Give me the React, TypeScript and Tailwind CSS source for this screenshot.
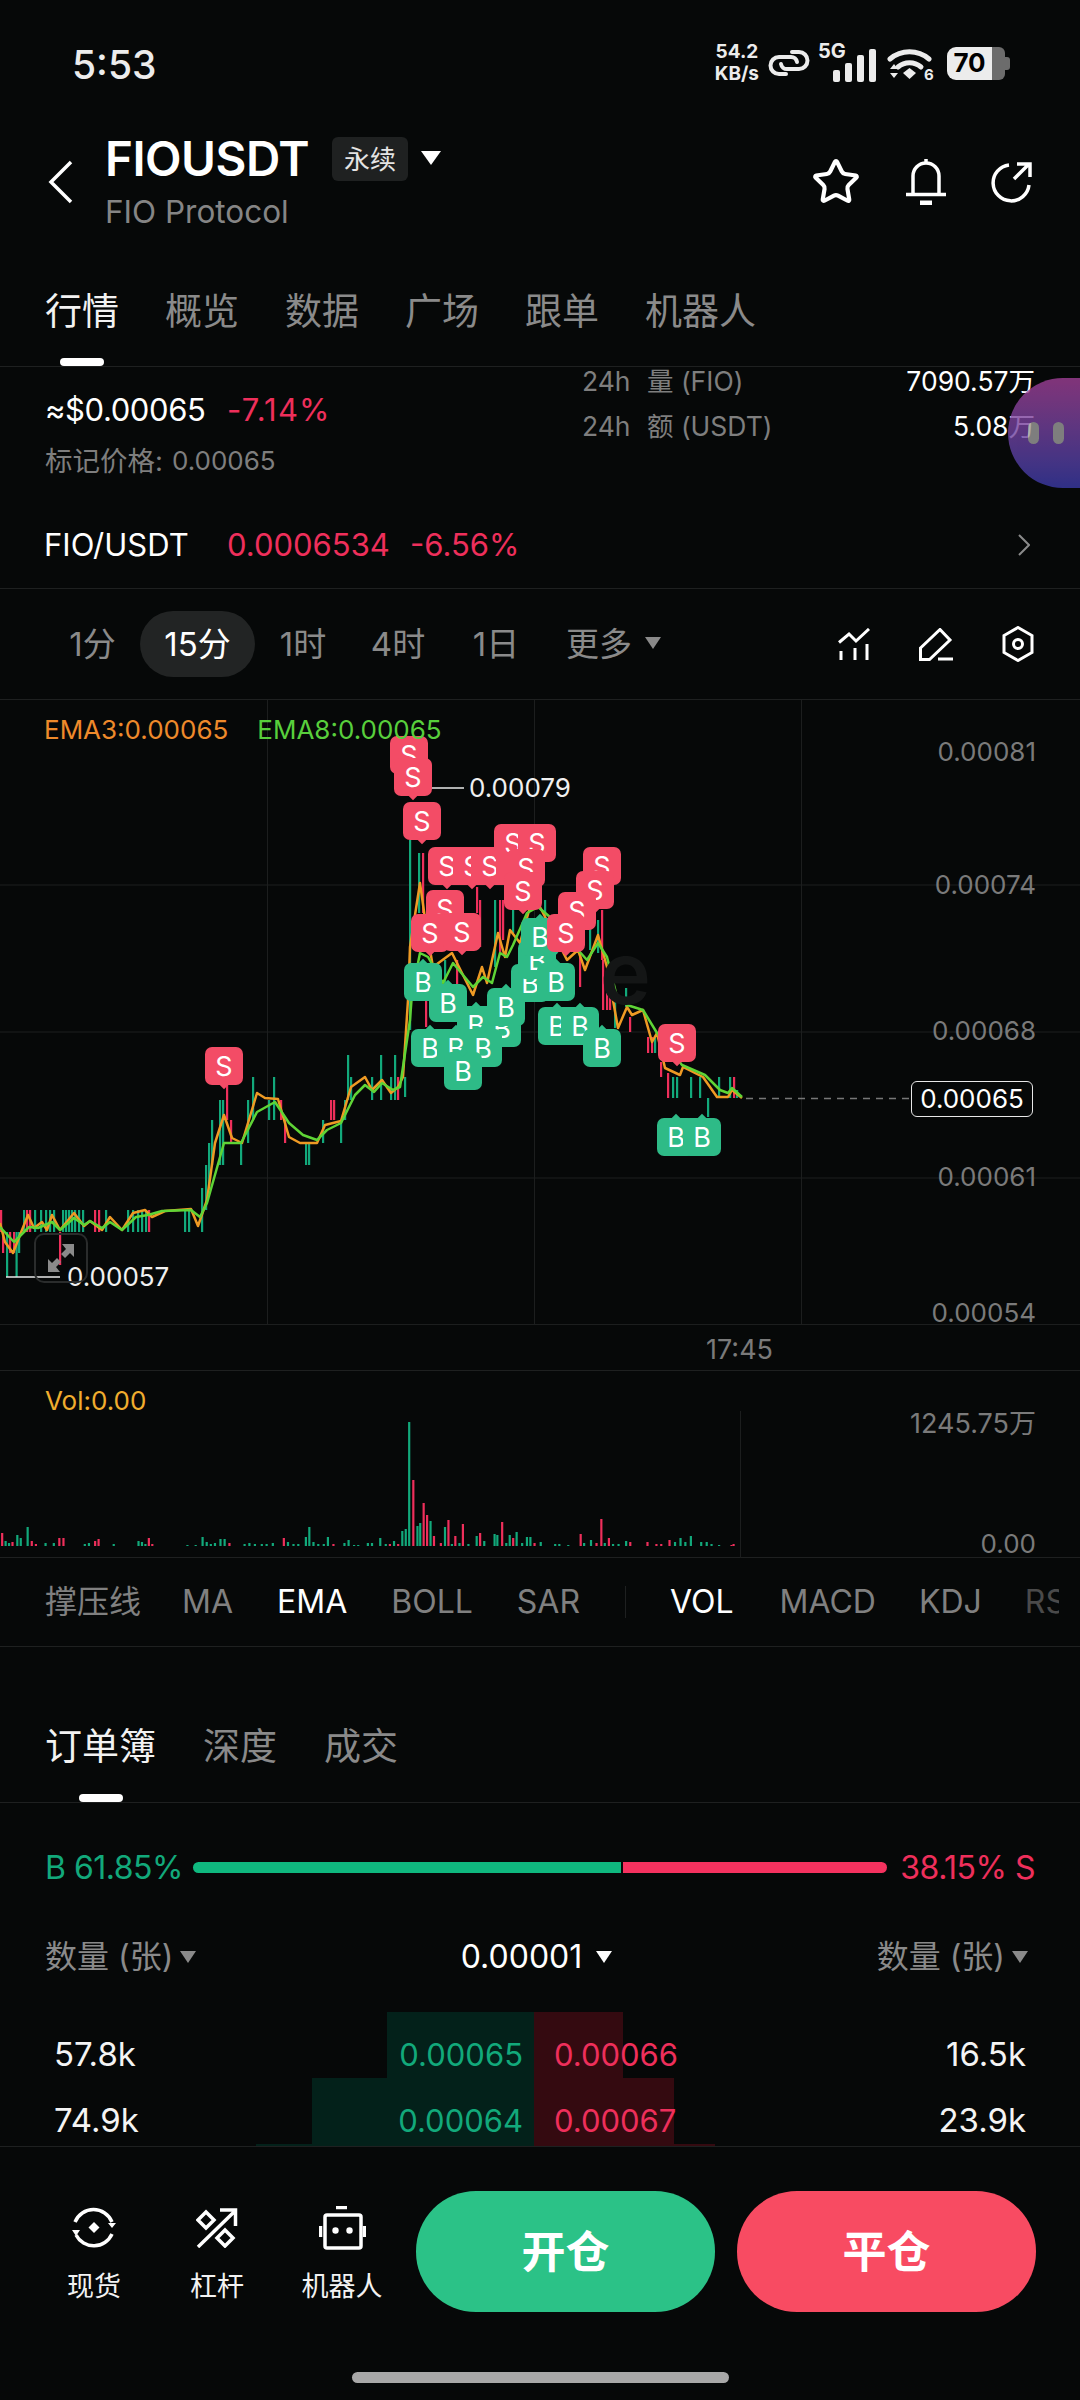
import React from 'react';
import { Star } from 'lucide-react';

const G = '#12a97b';
const R = '#ee2f5b';

// EMA lines, read off the reference in page coordinates
const EMA3 = '0,1223 5,1242 13,1253 20,1235 28,1215 34,1228 42,1222 47,1230 52,1215 60,1230 74,1213 84,1226 90,1221 102,1230 110,1217 122,1230 133,1213 145,1210 152,1217 165,1211 191,1209 198,1226 207,1200 215,1143 224,1115 232,1138 242,1143 257,1093 265,1098 278,1099 289,1137 300,1143 317,1143 325,1125 341,1121 351,1087 365,1077 372,1090 382,1080 391,1093 398,1087 403,1077 408,1000 410,947 420,883 427,933 433,967 452,953 473,995 482,967 487,983 498,933 505,957 510,930 520,943 530,907 540,907 567,960 578,950 585,970 598,935 607,967 618,1028 627,1007 632,1015 643,1010 652,1042 657,1033 665,1068 680,1075 683,1067 703,1077 717,1097 728,1097 732,1090 742,1098';
const EMA8 = '0,1227 14,1242 29,1227 38,1228 52,1222 60,1230 74,1218 84,1225 90,1221 102,1228 110,1222 122,1230 136,1217 148,1215 162,1211 191,1210 200,1217 207,1203 224,1143 241,1143 257,1112 275,1102 289,1123 303,1135 317,1140 327,1130 341,1123 355,1095 365,1085 374,1092 382,1083 393,1090 400,1087 410,1020 412,993 420,953 428,957 443,983 453,963 473,987 483,977 492,983 500,953 507,957 513,945 527,913 538,907 550,917 567,950 578,950 587,960 598,943 607,957 617,997 627,1005 643,1010 657,1033 682,1065 705,1075 720,1090 728,1093 732,1088 742,1097';

// x, top, bottom, colour of each candle
const CANDLES: [number, number, number, string][] = [
  [1, 1210, 1232, R], [3, 1232, 1253, R], [7, 1232, 1277, G], [10, 1232, 1253, R], [14, 1232, 1253, R], [16.5, 1232, 1277, G], [19, 1232, 1253, G],
  [24, 1210, 1232, G], [27, 1210, 1232, R], [30, 1210, 1232, R], [35, 1210, 1232, G], [41, 1210, 1232, G], [46, 1210, 1232, G], [50, 1210, 1232, G],
  [54, 1210, 1232, G], [60, 1232, 1265, R], [63, 1210, 1232, G], [66, 1210, 1232, G], [69, 1210, 1232, G], [72, 1210, 1232, G], [75, 1210, 1232, G],
  [79, 1210, 1232, G], [83, 1210, 1232, G], [95, 1210, 1232, R], [99, 1210, 1232, R], [106, 1210, 1232, G], [128, 1210, 1232, G], [133, 1210, 1232, G],
  [138, 1210, 1232, G], [142, 1210, 1232, G], [146, 1210, 1232, G], [149, 1210, 1232, R], [185, 1210, 1232, G], [189, 1210, 1232, G],
  [202, 1188, 1232, G], [206, 1165, 1210, G], [209, 1143, 1190, G], [212, 1120, 1165, G], [220, 1100, 1165, G], [223, 1100, 1165, G], [227, 1085, 1120, R],
  [231, 1120, 1143, R], [241, 1143, 1165, G], [248, 1100, 1143, G], [253, 1077, 1120, G], [269, 1100, 1120, G], [274, 1077, 1120, G], [281, 1100, 1120, R],
  [285, 1120, 1143, R], [306, 1143, 1165, G], [309, 1143, 1165, G], [323, 1120, 1143, G], [331, 1100, 1120, R], [334, 1100, 1120, R], [341, 1120, 1143, G],
  [345, 1100, 1120, G], [348, 1055, 1100, G], [351, 1077, 1100, G], [372, 1077, 1100, G], [381, 1055, 1100, G], [391, 1077, 1100, G], [395, 1055, 1100, G],
  [398, 1077, 1100, R], [405, 1077, 1097, G], [410, 840, 1030, G], [419, 853, 913, G], [423, 853, 913, R], [426, 1000, 1027, R], [445, 960, 997, G],
  [457, 960, 987, R], [477, 887, 913, R], [480, 900, 947, R], [495, 900, 967, G], [500, 900, 953, R], [503, 900, 940, R], [513, 907, 933, G], [545, 900, 920, G],
  [580, 953, 987, R], [590, 927, 950, G], [598, 920, 953, G], [602, 910, 960, R], [603, 960, 1010, R], [607, 977, 1010, R], [610, 977, 1010, R], [615, 1000, 1028, G],
  [626, 988, 1007, G], [630, 1017, 1032, R], [648, 1037, 1053, R], [652, 1037, 1053, R], [655, 1037, 1053, G], [661, 1062, 1077, R], [668, 1073, 1098, R],
  [673, 1077, 1098, G], [677, 1077, 1098, G], [691, 1077, 1098, G], [700, 1077, 1098, G], [708, 1098, 1117, G], [719, 1077, 1098, G], [730, 1077, 1098, G],
  [734, 1077, 1098, R], [737, 1090, 1098, G],
];

// x (in the crop's scale), height, colour of each volume bar
const VOLUME: [number, number, string][] = [
  [3, 13, R], [8, 5, G], [13, 3, G], [18, 4, R], [25, 11, G], [30, 8, G], [40, 19, G], [46, 5, R], [52, 2, R], [66, 3, G], [78, 3, G], [86, 8, R], [92, 8, R], [123, 2, G], [129, 3, G], [138, 5, R], [143, 7, R], [165, 2, G],
  [201, 5, G], [206, 4, G], [211, 2, G], [216, 8, R], [221, 2, R], [272, 1, G], [284, 1, G], [294, 9, G], [300, 4, G], [306, 2, G], [312, 3, G], [320, 7, G], [326, 7, G], [333, 3, R], [355, 2, G], [362, 3, G], [370, 2, G],
  [380, 2, G], [387, 2, G], [396, 3, G], [412, 8, R], [418, 4, G], [426, 2, G], [433, 2, G], [444, 9, G], [449, 19, G], [455, 4, G], [462, 2, G], [470, 2, G], [476, 9, G], [484, 2, R], [500, 3, G], [506, 6, G], [514, 1, G],
  [520, 1, G], [534, 3, G], [540, 3, G], [552, 8, G], [560, 2, G], [566, 2, R], [572, 5, G], [578, 2, R], [584, 15, G], [589, 17, G], [594, 124, G], [600, 66, R], [606, 20, G], [610, 23, G], [615, 43, R], [620, 31, R], [625, 25, G],
  [630, 10, R], [640, 3, R], [646, 19, G], [651, 26, R], [656, 2, G], [661, 10, R], [667, 3, G], [672, 22, R], [680, 2, G], [692, 10, G], [697, 13, R], [703, 5, G], [718, 12, G], [722, 11, G], [729, 24, R], [735, 3, G], [740, 11, G],
  [745, 8, R], [750, 14, G], [758, 3, G], [765, 9, G], [770, 9, G], [776, 3, R], [785, 4, G], [806, 2, G], [812, 2, G], [825, 1, G], [843, 12, R], [848, 3, G], [858, 6, G], [866, 3, R], [873, 27, R], [878, 3, G], [884, 8, R],
  [890, 2, G], [898, 2, G], [909, 5, G], [915, 4, R], [940, 4, R], [953, 2, R], [960, 2, R], [972, 6, R], [980, 4, G], [988, 8, G], [995, 4, G], [1003, 10, G], [1018, 4, G], [1026, 4, G], [1033, 2, G], [1044, 1, G], [1062, 1, R], [1065, 2, R],
];

// trade markers, centre in page coordinates, in paint order
const MARKERS: [string, number, number][] = [
  ['S', 224, 1066], ['S', 409, 755], ['S', 413, 777], ['S', 422, 821],
  ['S', 447, 866], ['S', 472, 866], ['S', 490, 866], ['S', 515, 866], ['S', 513, 843], ['S', 537, 843], ['S', 526, 868], ['S', 523, 891],
  ['S', 445, 909], ['S', 430, 933], ['S', 462, 932],
  ['B', 423, 982], ['B', 448, 1003], ['B', 476, 1025], ['B', 502, 1028], ['B', 506, 1007], ['B', 530, 983], ['B', 537, 960], ['B', 540, 937], ['B', 556, 982],
  ['B', 430, 1048], ['B', 456, 1048], ['B', 483, 1048], ['B', 463, 1071],
  ['B', 557, 1026], ['B', 580, 1026], ['B', 602, 1048],
  ['S', 602, 866], ['S', 595, 890], ['S', 577, 911], ['S', 566, 933],
  ['S', 677, 1043], ['B', 676, 1137], ['B', 702, 1137],
];

const AXIS: [string, string][] = [['0.00081', 'mt-[37px]'], ['0.00074', 'mt-[103px]'], ['0.00068', 'mt-[116px]'], ['0.00061', 'mt-[116px]'], ['0.00054', 'mt-[106px]']];

const Marker = ({ type, x, y }: { type: string; x: number; y: number }) => (
  <div
    className={`absolute w-[38px] h-[38px] rounded-[7px] flex items-center justify-center text-[27px] leading-none text-white ${type === 'S' ? 'bg-[#f34c66]' : 'bg-[#2ebb87]'}`}
    style={{ left: x - 19, top: y - 719 }}
  >
    {type}
    <span className={`absolute left-[16px] w-[6px] h-[6px] rotate-45 ${type === 'S' ? 'bottom-[-3px] bg-[#f34c66]' : 'top-[-3px] bg-[#2ebb87]'}`} />
  </div>
);

const Caret = ({ color = 'border-t-[#8a8a8a]' }: { color?: string }) => (
  <span className={`inline-block w-0 h-0 border-x-[8px] border-x-transparent border-t-[12px] ${color}`} />
);

const StatusBar = () => (
  <div className="h-[128px] pl-[72px] pr-[70px] flex items-start justify-between text-[#ececec] shrink-0">
    <span className="text-[39px] font-medium leading-none mt-[45px]">5:53</span>
    <div className="flex items-center gap-[8px] mt-[40px] h-[46px]">
      <div className="flex flex-col items-center text-[19px] font-bold leading-[22px] mr-[1px]">
        <span>54.2</span>
        <span>KB/s</span>
      </div>
      <svg width="42" height="34" viewBox="0 0 42 34" fill="none" stroke="#ececec" strokeWidth="4" strokeLinecap="round">
        <path d="M24 6h7a8.500 8.500 0 0 1 0 17H19a6 6 0 0 1-6-5" />
        <path d="M18 28h-7a8.500 8.500 0 0 1 0-17h12a6 6 0 0 1 6 5" />
      </svg>
      <div className="relative w-[58px] h-[38px]">
        <span className="absolute left-0 top-[-3px] text-[20px] font-bold leading-none">5G</span>
        <div className="absolute right-0 bottom-0 flex items-end gap-[5px]">
          <span className="w-[7px] h-[12px] rounded-[2px] bg-[#ececec]" />
          <span className="w-[7px] h-[19px] rounded-[2px] bg-[#ececec]" />
          <span className="w-[7px] h-[27px] rounded-[2px] bg-[#ececec]" />
          <span className="w-[7px] h-[33px] rounded-[2px] bg-[#ececec]" />
        </div>
      </div>
      <svg width="50" height="36" viewBox="0 0 50 36" fill="#ececec" className="ml-[3px]">
        <path d="M3 14a30 30 0 0 1 39 0" fill="none" stroke="#ececec" strokeWidth="5" strokeLinecap="round" />
        <path d="M11 22a18 18 0 0 1 23 0" fill="none" stroke="#ececec" strokeWidth="5" strokeLinecap="round" />
        <path d="M16 28l6.500-5 6.500 5-6.500 6z" />
        <path d="M3 24l4-5 4 5zM3 28l4 5 4-5z" />
        <text x="37" y="35" fontSize="15" fontWeight="700">6</text>
      </svg>
      <div className="flex items-center h-[33px] ml-[2px]">
        <div className="w-[45px] h-[33px] rounded-l-[9px] bg-[#ececec] text-[26px] font-bold text-black flex items-center justify-center leading-none">70</div>
        <div className="w-[13px] h-[33px] rounded-r-[6px] bg-[#6c6c6c]" />
        <div className="w-[5px] h-[13px] rounded-r-[3px] bg-[#6c6c6c]" />
      </div>
    </div>
  </div>
);

const Header = () => (
  <div className="h-[134px] pl-[48px] pr-[47px] flex items-start shrink-0">
    <svg width="26" height="44" viewBox="0 0 26 44" fill="none" stroke="white" strokeWidth="3.500" className="mt-[32px] mr-[31px]">
      <path d="M23 2 3 22l20 20" />
    </svg>
    <div className="flex flex-col">
      <div className="flex items-center h-[62px]">
        <span className="text-[47.500px] font-semibold text-white leading-none tracking-[-0.5px]">FIOUSDT</span>
        <span className="ml-[23px] w-[76px] h-[44px] rounded-[6px] bg-[#1f2121] text-[#e4e4e4] text-[26px] flex items-center justify-center">永续</span>
        <span className="ml-[13px] -mt-[3px] w-0 h-0 border-x-[10px] border-x-transparent border-t-[14px] border-t-white" />
      </div>
      <span className="text-[31.500px] leading-[40px] text-[#858585] mt-[2px]">FIO Protocol</span>
    </div>
    <div className="ml-auto flex items-center gap-[45px] mt-[29px]">
      <Star size={50} strokeWidth={2} color="white" />
      <svg width="40" height="46" viewBox="0 0 40 46" fill="none" stroke="white" strokeWidth="3.500">
        <path d="M7 35V17a13 13 0 0 1 26 0v18M0 35.500h40M20 0v4" />
        <path d="M14 44h12" strokeWidth="5" />
      </svg>
      <svg width="42" height="42" viewBox="0 0 42 42" fill="none" stroke="white" strokeWidth="3.500">
        <path d="M18 4a18 18 0 1 0 20 20" />
        <path d="M23 18 38 3M26 3h13v13" />
      </svg>
    </div>
  </div>
);

const Tabs = () => (
  <div className="h-[105px] px-[45px] flex gap-[46px] border-b border-[#1e2020] shrink-0 text-[37px] text-[#8a8a8a] leading-none pt-[31px]">
    {['行情', '概览', '数据', '广场', '跟单', '机器人'].map((t, i) => (
      <span key={t} className={`relative h-[37px] ${i === 0 ? 'text-[#f2f2f2]' : ''}`}>
        {t}
        {i === 0 && <span className="absolute left-[15px] top-[65px] w-[44px] h-[8px] rounded-full bg-white" />}
      </span>
    ))}
  </div>
);

const Stats = () => (
  <div className="relative h-[133px] px-[45px] flex justify-between shrink-0">
    <div className="flex flex-col pt-[23px]">
      <div className="flex text-[31px] leading-[40px] whitespace-nowrap">
        <span className="text-white w-[182px] tracking-[-0.4px]">≈$0.00065</span>
        <span className="text-[#ee2f5b] tracking-[1.2px]">-7.14%</span>
      </div>
      <div className="flex gap-[9px] leading-[34px] text-[#7e7e7e] mt-[14px] whitespace-nowrap">
        <span className="text-[27.500px]">标记价格:</span>
        <span className="text-[26px]">0.00065</span>
      </div>
    </div>
    <div className="w-[453px] flex flex-col text-[26.500px] leading-[34px] -mt-[9px]">
      {[['量 (FIO)', '7090.57万'], ['额 (USDT)', '5.08万']].map(([label, value]) => (
        <div key={label} className="flex h-[45px] items-center">
          <span className="text-[#7e7e7e] w-[65px]">24h</span>
          <span className="text-[#7e7e7e]">{label}</span>
          <span className="ml-auto text-white">{value}</span>
        </div>
      ))}
    </div>
    {/* floating assistant bubble, sits over the stats */}
    <div className="absolute right-0 top-[11px] w-[72px] h-[110px] rounded-l-[55px] bg-gradient-to-b from-[#a03f96] to-[#3a3aa6] opacity-80 flex items-center gap-[14px] pl-[20px]">
      <span className="w-[11px] h-[22px] rounded-full bg-[#9c9c9c]" />
      <span className="w-[11px] h-[22px] rounded-full bg-[#9c9c9c]" />
    </div>
  </div>
);

const PairRow = () => (
  <div className="h-[89px] pl-[44px] pr-[50px] flex items-center border-b border-[#1e2020] text-[31px] shrink-0 pt-[2px]">
    <span className="text-white w-[183px]">FIO/USDT</span>
    <span className="text-[#ee2f5b] w-[183px]">0.0006534</span>
    <span className="text-[#ee2f5b]">-6.56%</span>
    <svg width="12" height="22" viewBox="0 0 12 22" fill="none" stroke="#8a8a8a" strokeWidth="2" className="ml-auto">
      <path d="m1 1 10 10L1 21" />
    </svg>
  </div>
);

const Timeframes = () => (
  <div className="h-[111px] pl-[45px] pr-[46px] flex items-center border-b border-[#1e2020] text-[33px] text-[#8a8a8a] shrink-0">
    <div className="flex items-center">
      <span className="w-[95px] text-center pt-[2px]">1分</span>
      <span className="w-[115px] h-[66px] rounded-[33px] bg-[#222424] text-white flex items-center justify-center pt-[2px]">15分</span>
      <span className="w-[96px] text-center pt-[2px]">1时</span>
      <span className="w-[94px] text-center pt-[2px]">4时</span>
      <span className="w-[102px] text-center pt-[2px]">1日</span>
      <span className="ml-[19px] pt-[2px]">更多</span>
      <span className="ml-[13px] -mt-[3px] flex"><Caret /></span>
    </div>
    <div className="ml-auto flex items-center gap-[49px]">
      <svg width="32" height="32" viewBox="0 0 32 32" fill="none" stroke="white" strokeWidth="3">
        <path d="M1 14.500 11 6l7 7L31 1M3 23v9M17 20v12M29 16v16" />
      </svg>
      <svg width="34" height="33" viewBox="0 0 34 33" fill="none" stroke="white" strokeWidth="3">
        <path d="M1.500 20 21 1.500 31 12 10.500 31.500h-9zM19 31h15" />
      </svg>
      <svg width="32" height="36" viewBox="0 0 32 36" fill="none" stroke="white" strokeWidth="3">
        <path d="M16 1.500 30 9.500v17l-14 8-14-8v-17z" />
        <circle cx="16" cy="18" r="4.500" />
      </svg>
    </div>
  </div>
);

const Chart = () => (
  <div className="relative h-[625px] overflow-hidden shrink-0">
    <svg width="1080" height="625" viewBox="0 700 1080 625" className="absolute inset-0">
      {[885, 1032, 1178, 1324.5].map((y) => <line key={y} x1="0" x2="1080" y1={y} y2={y} stroke="#1c1e1e" />)}
      {[267.5, 534.5, 801.5].map((x) => <line key={x} x1={x} x2={x} y1="700" y2="1325" stroke="#1c1e1e" />)}
      {CANDLES.map(([x, a, b, c], i) => <rect key={i} x={x - 1} y={a} width="2.200" height={b - a} fill={c} />)}
      <polyline points={EMA3} fill="none" stroke="#ee9a24" strokeWidth="2.500" strokeLinejoin="round" />
      <polyline points={EMA8} fill="none" stroke="#5fd436" strokeWidth="2.500" strokeLinejoin="round" />
      <line x1="410" x2="464" y1="788" y2="788" stroke="#e8e8e8" strokeWidth="1.500" />
      <line x1="6" x2="60" y1="1277" y2="1277" stroke="#e8e8e8" strokeWidth="1.500" />
      <line x1="746" x2="910" y1="1098.500" y2="1098.500" stroke="#777" strokeWidth="1.500" strokeDasharray="7 6" />
    </svg>
    <span className="absolute left-[600px] top-[230px] text-[86px] leading-none font-semibold text-[#141616]">e</span>
    {MARKERS.map(([t, x, y], i) => <Marker key={i} type={t} x={x} y={y} />)}
    <div className="absolute left-[44px] top-[15px] flex gap-[29px] text-[26px] leading-[30px]">
      <span className="text-[#ee8a2b]">EMA3:0.00065</span>
      <span className="text-[#58cf3c]">EMA8:0.00065</span>
    </div>
    <span className="absolute left-[469px] top-[73px] text-[26px] leading-[30px] text-[#f0f0f0]">0.00079</span>
    <span className="absolute left-[67px] top-[562px] text-[26px] leading-[30px] text-[#f0f0f0]">0.00057</span>
    <div className="absolute left-[34px] top-[533px] w-[54px] h-[50px] rounded-[10px] border-[2px] border-[#2a2c2c] flex items-center justify-center">
      <svg width="28" height="28" viewBox="0 0 28 28" fill="#8a8a8a">
        <path d="M27 0v13l-4-4-5 5-4-4 5-5-4-5zM1 28V15l4 4 5-5 4 4-5 5 4 5z" />
      </svg>
    </div>
    <div className="absolute right-[44px] top-0 flex flex-col items-end text-[26px] leading-[30px] text-[#7a7a7a]">
      {AXIS.map(([v, m]) => <span key={v} className={m}>{v}</span>)}
    </div>
    <span className="absolute left-[911px] top-[381px] w-[122px] h-[36px] rounded-[6px] border border-[#e8e8e8] bg-[#060808] text-[26px] leading-none text-white flex items-center justify-center">0.00065</span>
  </div>
);

const Volume = () => (
  <>
    <div className="h-[46px] border-b border-[#1e2020] text-[27px] leading-[50px] text-[#7a7a7a] pl-[706px] shrink-0">17:45</div>
    <div className="relative h-[187px] border-b border-[#1e2020] shrink-0">
      <svg width="1080" height="187" viewBox="0 1372 1080 187" className="absolute inset-0">
        <line x1="740.500" x2="740.500" y1="1412" y2="1559" stroke="#1c1e1e" />
        {VOLUME.map(([x, h, c]) => <rect key={x} x={x / 1.452 - 1} y={1547 - h} width="2.200" height={h} fill={c} />)}
      </svg>
      <span className="absolute left-[45px] top-[15px] text-[26px] leading-[30px] text-[#f0ad2e]">Vol:0.00</span>
      <span className="absolute right-[44px] top-[38px] text-[27px] leading-[30px] text-[#7a7a7a]">1245.75万</span>
      <span className="absolute right-[44px] top-[158px] text-[26px] leading-[30px] text-[#7a7a7a]">0.00</span>
    </div>
  </>
);

const Indicators = () => (
  <div className="h-[89px] pl-[45px] flex items-center border-b border-[#1e2020] text-[32px] text-[#808080] overflow-hidden whitespace-nowrap shrink-0">
    <span>撑压线</span>
    <span className="ml-[41px]">MA</span>
    <span className="ml-[44px] text-white">EMA</span>
    <span className="ml-[44px]">BOLL</span>
    <span className="ml-[44px]">SAR</span>
    <span className="ml-[45px] w-px h-[32px] bg-[#1e2020]" />
    <span className="ml-[44px] text-white">VOL</span>
    <span className="ml-[46px]">MACD</span>
    <span className="ml-[43px]">KDJ</span>
    <span className="ml-[43px] w-[34px] overflow-hidden text-[#4a4a4a]">RSI</span>
  </div>
);

const BookRow = ({ buy, bid, ask, sell, bidW, askW }: { buy: string; bid: string; ask: string; sell: string; bidW: number; askW: number }) => (
  <div className="flex h-[66px] shrink-0">
    <div className="relative w-[534px] flex items-center justify-between pl-[54px] pr-[11px] pt-[18px] leading-none">
      <div className="absolute right-0 inset-y-0 bg-[#03211a]" style={{ width: bidW }} />
      <span className="relative text-[33px] text-[#f4f4f4]">{buy}</span>
      <span className="relative text-[#12a97b]">{bid}</span>
    </div>
    <div className="relative flex-1 flex items-center justify-between pl-[20px] pr-[54px] pt-[18px] leading-none">
      <div className="absolute left-0 inset-y-0 bg-[#340a10]" style={{ width: askW }} />
      <span className="relative text-[#ee2f5b]">{ask}</span>
      <span className="relative text-[33px] text-[#f4f4f4]">{sell}</span>
    </div>
  </div>
);

const OrderBook = () => (
  <div className="flex flex-col h-[500px] shrink-0">
    <div className="h-[156px] px-[45px] flex gap-[47px] border-b border-[#1e2020] text-[37px] text-[#8a8a8a] leading-none pt-[81px] shrink-0">
      <span className="relative h-[37px] text-[#f2f2f2]">
        订单簿
        <span className="absolute left-[34px] top-[66px] w-[44px] h-[8px] rounded-full bg-white" />
      </span>
      <span>深度</span>
      <span>成交</span>
    </div>
    <div className="h-[65px] mt-[32px] px-[45px] flex items-center text-[32px] leading-none shrink-0">
      <span className="text-[#12a97b] w-[148px] tracking-[-0.5px] whitespace-nowrap">B 61.85%</span>
      <div className="w-[428px] h-[11px] rounded-l-full bg-[#0fb97f]" />
      <div className="w-[2px]" />
      <div className="w-[264px] h-[11px] rounded-r-full bg-[#f5325f]" />
      <span className="text-[#ee2f5b] ml-auto tracking-[-0.5px] whitespace-nowrap">38.15% S</span>
    </div>
    <div className="h-[112px] pl-[45px] pr-[52px] flex items-center justify-between text-[32px] text-[#8a8a8a] leading-none shrink-0 pt-[2px]">
      <span className="flex items-center gap-[7px] whitespace-nowrap">数量 (张) <Caret /></span>
      <span className="flex items-center gap-[14px] text-white">0.00001 <Caret color="border-t-white" /></span>
      <span className="flex items-center gap-[7px] whitespace-nowrap">数量 (张) <Caret /></span>
    </div>
    <div className="flex-1 flex flex-col overflow-hidden text-[31px] border-b border-[#1e2020]">
      <BookRow buy="57.8k" bid="0.00065" ask="0.00066" sell="16.5k" bidW={147} askW={89} />
      <BookRow buy="74.9k" bid="0.00064" ask="0.00067" sell="23.9k" bidW={222} askW={140} />
      <BookRow buy="" bid="" ask="" sell="" bidW={278} askW={181} />
    </div>
  </div>
);

const SpotIcon = () => (
  <svg width="46" height="46" viewBox="0 0 46 46" fill="none" stroke="white" strokeWidth="3.500">
    <path d="M4 17A20 20 0 0 1 41 17" />
    <path d="M41 29A20 20 0 0 1 5 30" />
    <path d="M37 18h8l-4 5zM1 25h8l-4 6z" fill="white" stroke="none" />
    <path d="m23 17 5.500 5.500L23 28l-5.500-5.500z" fill="white" stroke="none" />
  </svg>
);

const LeverIcon = () => (
  <svg width="42" height="40" viewBox="0 0 42 40" fill="none" stroke="white" strokeWidth="3.500">
    <path d="M2 39 39 3M24 2h15.500v16" />
    <path d="m10 4 8 8-8 8-8-8zM29 22l8 8-8 8-8-8z" />
  </svg>
);

const RobotIcon = () => (
  <svg width="47" height="44" viewBox="0 0 47 44" fill="none" stroke="white" strokeWidth="3.500">
    <path d="M17 1.500h11" />
    <rect x="6" y="9" width="36" height="33" rx="2" />
    <path d="M1.500 20v11M45.500 20v11" />
    <circle cx="16.500" cy="24.500" r="3.200" fill="white" stroke="none" />
    <circle cx="30.500" cy="24.500" r="3.200" fill="white" stroke="none" />
  </svg>
);

const BottomBar = () => (
  <div className="flex-1 flex flex-col">
    <div className="flex items-start pl-[44px] pr-[44px] pt-[44px]">
      <div className="flex text-[27px] text-[#f2f2f2] leading-none">
        {[
          { label: '现货', icon: <SpotIcon />, w: 'w-[100px]' },
          { label: '杠杆', icon: <LeverIcon />, w: 'w-[146px]' },
          { label: '机器人', icon: <RobotIcon />, w: 'w-[104px]' },
        ].map(({ label, icon, w }) => (
          <div key={label} className={`${w} flex flex-col items-center`}>
            <div className="h-[46px] mt-[14px] flex items-center">{icon}</div>
            <span className="mt-[22px] whitespace-nowrap">{label}</span>
          </div>
        ))}
      </div>
      <div className="ml-auto flex gap-[22px] text-[44px] font-bold text-white">
        <button className="w-[299px] h-[121px] rounded-[60px] bg-[#2bc287]">开仓</button>
        <button className="w-[299px] h-[121px] rounded-[60px] bg-[#f84b62]">平仓</button>
      </div>
    </div>
    <div className="mt-[60px] mx-auto w-[377px] h-[11px] rounded-full bg-[#a8a8a8]" />
  </div>
);

const App: React.FC = () => {
  return (
    <div className="w-[1080px] h-[2400px] overflow-hidden bg-[#060808] flex flex-col font-[family-name:Inter,'Noto_Sans_CJK_SC',sans-serif]">
      <StatusBar />
      <Header />
      <Tabs />
      <Stats />
      <PairRow />
      <Timeframes />
      <Chart />
      <Volume />
      <Indicators />
      <OrderBook />
      <BottomBar />
    </div>
  );
};

export default App;
